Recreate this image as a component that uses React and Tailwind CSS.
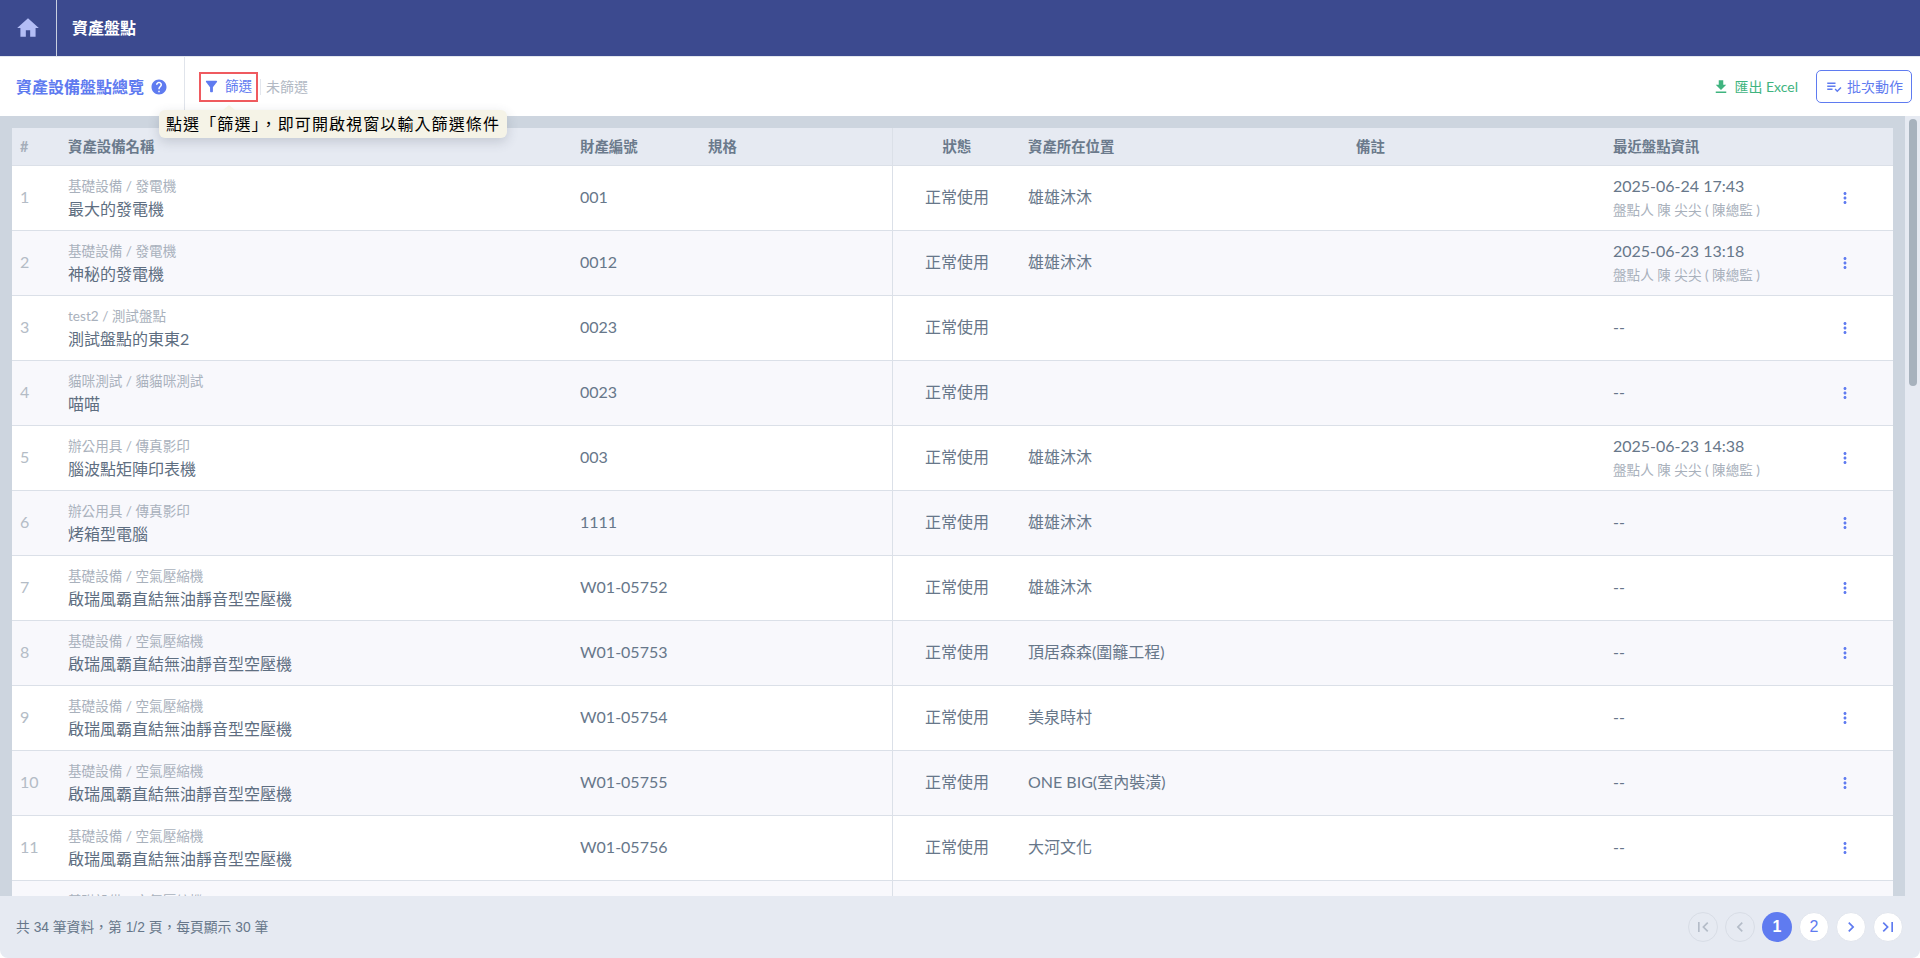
import { MdHome, MdHelp, MdFilterAlt, MdFileDownload, MdPlaylistAddCheck, MdMoreVert, MdFirstPage, MdLastPage, MdChevronLeft, MdChevronRight } from "react-icons/md";

const inspector = "盤點人 陳 尖尖 ( 陳總監 )";
const compressor = "基礎設備 / 空氣壓縮機";
const compressorName = "啟瑞風霸直結無油靜音型空壓機";

const rows = [
  { cat: "基礎設備 / 發電機", name: "最大的發電機", code: "001", place: "雄雄沐沐", time: "2025-06-24 17:43" },
  { cat: "基礎設備 / 發電機", name: "神秘的發電機", code: "0012", place: "雄雄沐沐", time: "2025-06-23 13:18" },
  { cat: "test2 / 測試盤點", name: "測試盤點的東東2", code: "0023", place: "" },
  { cat: "貓咪測試 / 貓貓咪測試", name: "喵喵", code: "0023", place: "" },
  { cat: "辦公用具 / 傳真影印", name: "腦波點矩陣印表機", code: "003", place: "雄雄沐沐", time: "2025-06-23 14:38" },
  { cat: "辦公用具 / 傳真影印", name: "烤箱型電腦", code: "1111", place: "雄雄沐沐" },
  { cat: compressor, name: compressorName, code: "W01-05752", place: "雄雄沐沐" },
  { cat: compressor, name: compressorName, code: "W01-05753", place: "頂居森森(圍籬工程)" },
  { cat: compressor, name: compressorName, code: "W01-05754", place: "美泉時村" },
  { cat: compressor, name: compressorName, code: "W01-05755", place: "ONE BIG(室內裝潢)" },
  { cat: compressor, name: compressorName, code: "W01-05756", place: "大河文化" },
  { cat: compressor, name: compressorName, code: "W01-05757", place: "大河文化" },
];

const cols = "grid grid-cols-[56px_512px_128px_185px_135px_328px_257px_1fr]";

function PageButton({ children, active, disabled }) {
  if (active) {
    return <div className="w-[30px] h-[30px] rounded-full bg-[#5f7bf0] text-white flex items-center justify-center text-[16px] font-semibold">{children}</div>;
  }
  if (disabled) {
    return <div className="w-[30px] h-[30px] rounded-full border border-[#d8dde6] text-[#b4bcc8] flex items-center justify-center text-[20px]">{children}</div>;
  }
  return <div className="w-[30px] h-[30px] rounded-full bg-white border border-[#e2e6ee] text-[#5f7bf0] flex items-center justify-center text-[16px]">{children}</div>;
}

export default function App() {
  return (
    <div className="h-screen flex flex-col overflow-hidden bg-white font-['Lato','Noto_Sans_CJK_TC',sans-serif]">
      <header className="h-14 shrink-0 bg-[#3c4a8f] flex items-stretch">
        <div className="w-[57px] border-r border-[#c9cfe0] flex items-center justify-center text-[#b3bdf5] text-[26px]">
          <MdHome />
        </div>
        <div className="pl-[15px] flex items-center text-white text-[16px] font-bold">資產盤點</div>
      </header>

      <div className="relative h-[60px] shrink-0 bg-white border-t border-[#e3e7ee] flex items-center">
        <div className="w-[185px] h-full border-r border-[#e0e4eb] pl-4 flex items-center gap-1.5 text-[16px] font-bold text-[#5f7bf0]">
          資產設備盤點總覽
          <MdHelp className="text-[18px]" />
        </div>
        <div className="ml-[14px] h-[30px] w-[59px] border-2 border-[#ef5a5f] flex items-center justify-center gap-[5px] pr-[2px] text-[13.6px] text-[#5f7bf0]">
          <MdFilterAlt className="text-[17px]" />
          <span>篩選</span>
        </div>
        <span className="ml-[2px] h-4 w-px bg-[#e3e7ee]" />
        <span className="ml-[5px] text-[14px] text-[#b2b9c4]">未篩選</span>

        <div className="ml-auto flex items-center text-[14px] text-[#3fb47f] gap-[4px]">
          <MdFileDownload className="text-[18px]" />
          <span>匯出 Excel</span>
        </div>
        <div className="ml-[18px] mr-2 w-[96px] h-[33px] border border-[#5f7bf0] rounded-[5px] flex items-center justify-center gap-1 text-[14px] text-[#5f7bf0]">
          <MdPlaylistAddCheck className="text-[18px]" />
          <span>批次動作</span>
        </div>

        <div className="absolute left-[159px] top-[53px] z-10 h-[28px] w-[348px] rounded-md bg-[#f5f3e7] shadow-[0_4px_12px_rgba(60,70,90,0.2)] flex items-center justify-center text-[16px] tracking-[1.1px] text-black">
          <span className="absolute left-[64px] -top-[5px] w-0 h-0 border-x-[6px] border-x-transparent border-b-[5px] border-b-[#f5f3e7]" />
          點選「篩選」，即可開啟視窗以輸入篩選條件
        </div>
      </div>

      <div className="flex-1 min-h-0 flex overflow-hidden">
        <main className="flex-1 min-w-0 bg-[#cdd5df] px-3 pt-3 overflow-hidden">
          <div className={`${cols} h-[38px] bg-[#e6eaf2] border-b border-[#dbe0e8] text-[14.4px] font-bold text-[#6b7a8c]`}>
            <div className="pl-2 flex items-center text-[#a5aeba]">#</div>
            <div className="flex items-center">資產設備名稱</div>
            <div className="flex items-center">財產編號</div>
            <div className="border-r border-[#dbe0e8] flex items-center">規格</div>
            <div className="flex items-center justify-center pr-[7px]">狀態</div>
            <div className="flex items-center">資產所在位置</div>
            <div className="flex items-center">備註</div>
            <div className="flex items-center">最近盤點資訊</div>
          </div>
          {rows.map((r, i) => (
            <div key={i} className={`${cols} h-[65px] border-b border-[#dbe0e8] text-[16px] text-[#67778a] ${i % 2 ? "bg-[#f8f8fc]" : "bg-white"}`}>
              <div className="pl-2 pb-0.5 flex items-center text-[#b4bcc6]">{i + 1}</div>
              <div className="flex flex-col justify-center">
                <div className="text-[13.6px] leading-[22px] text-[#a9b1bc]">{r.cat}</div>
                <div className="leading-[24px] text-[#5e6e81]">{r.name}</div>
              </div>
              <div className="pb-0.5 flex items-center">{r.code}</div>
              <div className="border-r border-[#dbe0e8]" />
              <div className="pb-0.5 flex items-center justify-center pr-[7px]">正常使用</div>
              <div className="pb-0.5 flex items-center">{r.place}</div>
              <div />
              <div className="flex items-center justify-between pr-[39px]">
                {r.time ? (
                  <div className="pb-px">
                    <div className="leading-[24px]">{r.time}</div>
                    <div className="mt-px text-[13.6px] leading-[22px] text-[#a9b1bc]">{inspector}</div>
                  </div>
                ) : (
                  <div className="pb-0.5">--</div>
                )}
                <MdMoreVert className="text-[#5f7bf0] text-[18px]" />
              </div>
            </div>
          ))}
        </main>
        <div className="w-[15px] shrink-0 bg-[#e6eaf2] pt-[3px] pl-1">
          <div className="w-2 h-[267px] rounded-full bg-[#a7b2bd]" />
        </div>
      </div>

      <footer className="h-[62px] shrink-0 bg-[#e6eaf2] rounded-b-lg flex items-center pl-4 pr-[17px] text-[13.8px] text-[#67778a] font-['Liberation_Sans','Noto_Sans_CJK_TC',sans-serif]">
        <span className="pt-0.5">共 34 筆資料，第 1/2 頁，每頁顯示 30 筆</span>
        <div className="ml-auto flex items-center gap-[7px]">
          <PageButton disabled><MdFirstPage /></PageButton>
          <PageButton disabled><MdChevronLeft /></PageButton>
          <PageButton active>1</PageButton>
          <PageButton>2</PageButton>
          <PageButton><MdChevronRight className="text-[20px]" /></PageButton>
          <PageButton><MdLastPage className="text-[20px]" /></PageButton>
        </div>
      </footer>
    </div>
  );
}
